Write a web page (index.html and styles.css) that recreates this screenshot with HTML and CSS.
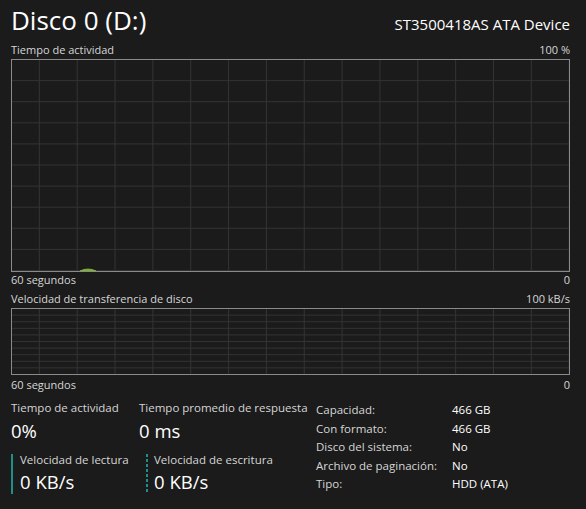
FILE: index.html
```html
<!DOCTYPE html>
<html lang="es">
<head>
  <meta charset="UTF-8" />
  <meta name="viewport" content="width=device-width, initial-scale=1.0" />
  <title>Disco 0 (D:)</title>
  <link rel="stylesheet" href="styles.css">
</head>
<body>
  <div class="panel">
    <div class="header">
      <h1 class="title">Disco 0 (D:)</h1>
      <div class="device">ST3500418AS ATA Device</div>
    </div>

    <div class="graph-labels top-label">
      <span>Tiempo de actividad</span>
      <span>100 %</span>
    </div>
    <div class="graph graph-activity">
      <svg class="blip" width="16" height="3" viewBox="0 0 16 3">
        <path d="M0 3 Q8 -1 16 3 Z" fill="#6fa82a" stroke="#8fc43a" stroke-width="0.8" />
      </svg>
    </div>
    <div class="graph-labels">
      <span>60 segundos</span>
      <span>0</span>
    </div>

    <div class="graph-labels section-label">
      <span>Velocidad de transferencia de disco</span>
      <span>100 kB/s</span>
    </div>
    <div class="graph graph-transfer"></div>
    <div class="graph-labels">
      <span>60 segundos</span>
      <span>0</span>
    </div>

    <div class="stats">
      <div class="stats-left">
        <div class="stat-row">
          <div class="stat stat-activity">
            <div class="stat-label">Tiempo de actividad</div>
            <div class="stat-value">0%</div>
          </div>
          <div class="stat">
            <div class="stat-label">Tiempo promedio de respuesta</div>
            <div class="stat-value">0 ms</div>
          </div>
        </div>
        <div class="stat-row speeds">
          <div class="stat speed speed-read">
            <div class="stat-label">Velocidad de lectura</div>
            <div class="stat-value">0 KB/s</div>
          </div>
          <div class="stat speed speed-write">
            <div class="stat-label">Velocidad de escritura</div>
            <div class="stat-value">0 KB/s</div>
          </div>
        </div>
      </div>

      <dl class="details">
        <dt>Capacidad:</dt><dd>466 GB</dd>
        <dt>Con formato:</dt><dd>466 GB</dd>
        <dt>Disco del sistema:</dt><dd>No</dd>
        <dt>Archivo de paginación:</dt><dd>No</dd>
        <dt>Tipo:</dt><dd>HDD (ATA)</dd>
      </dl>
    </div>
  </div>
</body>
</html>
```

FILE: styles.css
```css
:root {
  --bg: #1b1b1b;
  --text: #ffffff;
  --label: #d6d6d6;
  --grid: #333333;
  --frame: #8a8a8a;
  --teal: #1f8f8c;
}
body {
  margin: 0;
  background: var(--bg);
  color: var(--text);
  font-family: "Open Sans", "Noto Sans", sans-serif;
}
.panel {
  padding: 0 16px 0 11px;
}
.header {
  display: flex;
  justify-content: space-between;
  align-items: baseline;
}
.title {
  margin: 0;
  font-size: 26px;
  font-weight: 400;
  line-height: 40px;
}
.device {
  font-size: 15px;
}
.graph-labels {
  display: flex;
  justify-content: space-between;
  font-size: 11px;
  line-height: 15px;
  color: var(--label);
}
.top-label {
  margin-top: 2px;
  margin-bottom: 2px;
}
.section-label {
  margin-top: 4px;
  margin-bottom: 2px;
}
.graph {
  position: relative;
  border: 1px solid var(--frame);
  background-color: var(--bg);
  background-image:
    linear-gradient(to right, transparent 37px, var(--grid) 37px),
    linear-gradient(to bottom, transparent calc(100% - 1px), var(--grid) calc(100% - 1px));
}
.graph-activity {
  height: 211px;
  background-size: 37.85px 100%, 100% 21.1px;
  background-position: -10px 0, 0 0;
}
.graph-transfer {
  height: 65px;
  margin-bottom: 2px;
  background-size: 37.85px 100%, 100% 6.6px;
  background-position: -10px 0, 0 0;
}
.blip {
  position: absolute;
  left: 68px;
  bottom: 0;
  display: block;
}
.stats {
  display: flex;
  margin-top: 8px;
}
.stats-left {
  width: 305px;
}
.stat-row {
  display: flex;
}
.stat-label {
  font-size: 11.5px;
  line-height: 16px;
  color: var(--label);
}
.stat-value {
  font-size: 18.5px;
  line-height: 24px;
  margin-top: 3px;
}
.stat-activity {
  width: 128px;
}
.speeds {
  margin-top: 11px;
}
.speed {
  padding-left: 7px;
}
.speed .stat-label {
  line-height: 12px;
}
.speed .stat-value {
  margin-top: 4px;
}
.speed-read {
  width: 126px;
  border-left: 2px solid var(--teal);
}
.speed-write {
  background: repeating-linear-gradient(to bottom, var(--teal) 0 3px, transparent 3px 5px) no-repeat left top / 2px 100%;
  padding-left: 8px;
}
.details {
  display: grid;
  grid-template-columns: 136px auto;
  margin: 1px 0 0;
  font-size: 11.5px;
  line-height: 17.7px;
}
.details dt {
  color: var(--label);
}
.details dd {
  margin: 0;
}
```
